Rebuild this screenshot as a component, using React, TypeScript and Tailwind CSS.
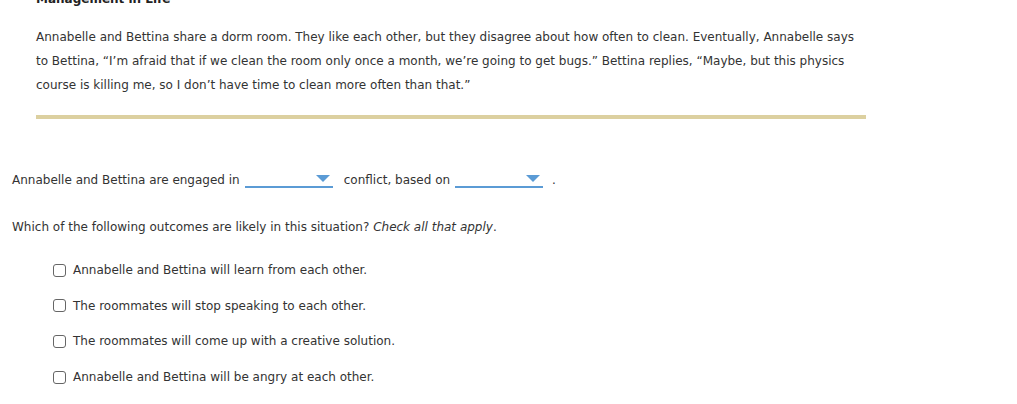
import React from "react";

const Dropdown = ({ width }: { width: string }) => (
  <span className={`inline-flex items-end justify-end ${width} h-[15px] border-b-2 border-[#5b9bd5] align-middle pr-[3px] pb-[4px]`}>
    <svg width="14" height="7" viewBox="0 0 14 7">
      <path d="M0 0 H14 L7 7 Z" fill="#5b9bd5" />
    </svg>
  </span>
);

const options = [
  "Annabelle and Bettina will learn from each other.",
  "The roommates will stop speaking to each other.",
  "The roommates will come up with a creative solution.",
  "Annabelle and Bettina will be angry at each other.",
];

export default function App() {
  return (
    <div className="w-[1017px] h-[404px] overflow-hidden bg-white text-[#333] font-['DejaVu_Sans',Verdana,sans-serif]">
      <div className="pl-[36px] -mt-[9px]">
        <div className="text-[12px] font-bold text-[#222] leading-[16px]">Management in Life</div>
        <p className="mt-[18px] w-[830px] text-[12px] leading-[24px]">
          Annabelle and Bettina share a dorm room. They like each other, but they disagree about how often to clean. Eventually, Annabelle says to Bettina, “I’m afraid that if we clean the room only once a month, we’re going to get bugs.” Bettina replies, “Maybe, but this physics course is killing me, so I don’t have time to clean more often than that.”
        </p>
        <div className="mt-[18px] w-[830px] h-[4px] bg-[#dcd0a0]" />
      </div>
      <div className="pl-[12px] mt-[51px] text-[12px] flex items-center h-[20px]">
        <span>Annabelle and Bettina are engaged in</span>
        <span className="ml-[5px]"><Dropdown width="w-[88px]" /></span>
        <span className="ml-[11px]">conflict, based on</span>
        <span className="ml-[5px]"><Dropdown width="w-[88px]" /></span>
        <span className="ml-[9px]">.</span>
      </div>
      <div className="pl-[12px] mt-[27px] text-[12px] leading-[20px]">
        Which of the following outcomes are likely in this situation? <i>Check all that apply</i>.
      </div>
      <div className="pl-[53px] mt-[23px] flex flex-col gap-[15.7px] text-[12px]">
        {options.map((o) => (
          <label key={o} className="flex items-center gap-[7px] h-[20px]">
            <span className="w-[13px] h-[13px] border border-[#666] rounded-[3px] bg-white" />
            <span>{o}</span>
          </label>
        ))}
      </div>
    </div>
  );
}
